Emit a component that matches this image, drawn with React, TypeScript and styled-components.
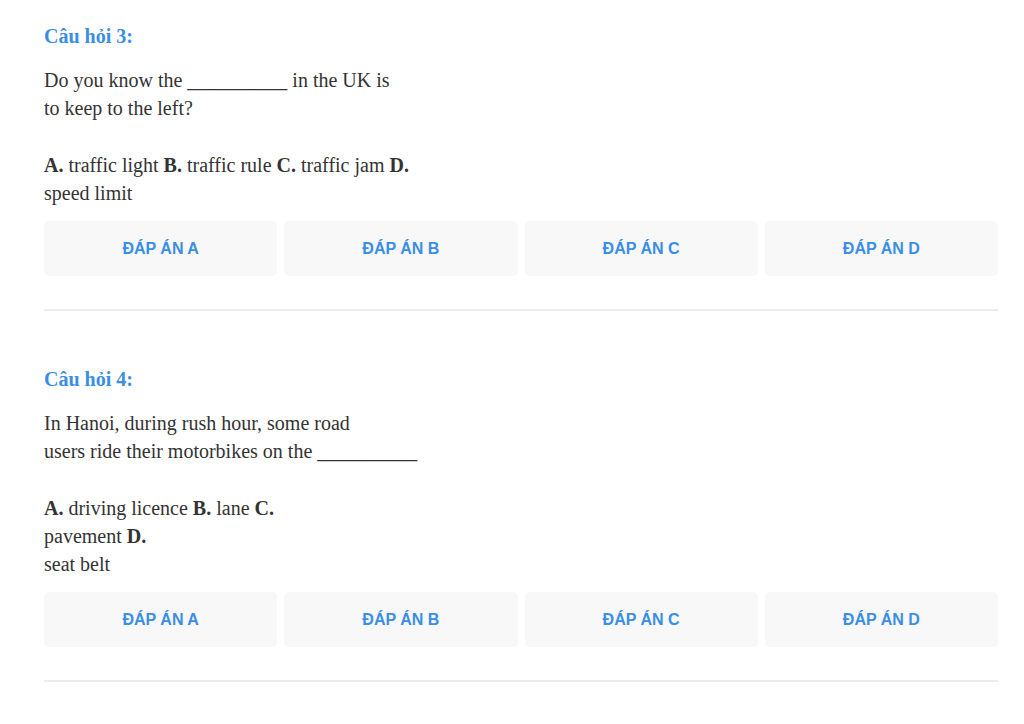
import React from "react";
import styled, { createGlobalStyle } from "styled-components";

const Global = createGlobalStyle`
  html, body { margin: 0; padding: 0; background: #ffffff; }
  body { font-family: "Liberation Serif", "Times New Roman", serif; color: #333333; }
`;

const Page = styled.div`
  padding: 22px 26px 0 44px;
  width: 954px;
`;

const Question = styled.section`
  display: flex;
  flex-direction: column;
`;

const Title = styled.div`
  font-family: "Liberation Serif", "Times New Roman", serif;
  font-weight: bold;
  font-size: 20px;
  line-height: 28px;
  color: #3a8ee4;
  margin-bottom: 16px;
`;

const Para = styled.p<{ $gap?: number }>`
  margin: 0 0 ${(p) => p.$gap ?? 0}px 0;
  font-size: 20px;
  line-height: 28px;
  color: #333333;
`;

const Buttons = styled.div`
  display: grid;
  grid-template-columns: repeat(4, 1fr);
  gap: 7px;
`;

const AnswerButton = styled.button`
  height: 55px;
  border: none;
  border-radius: 5px;
  background: #f8f8f8;
  color: #3a8ee4;
  font-family: "Liberation Sans", Arial, sans-serif;
  font-weight: bold;
  font-size: 16px;
  cursor: pointer;
  display: flex;
  align-items: center;
  justify-content: center;
`;

const Divider = styled.hr`
  border: none;
  height: 2px;
  background: #ececec;
  margin: 33px 0 54px 0;
`;

type Q = {
  n: number;
  text: React.ReactNode;
  options: React.ReactNode;
};

const questions: Q[] = [
  {
    n: 3,
    text: (
      <>
        Do you know the __________ in the UK is
        <br />
        to keep to the left?
      </>
    ),
    options: (
      <>
        <b>A.</b> traffic light <b>B.</b> traffic rule <b>C.</b> traffic jam <b>D.</b>
        <br />
        speed limit
      </>
    ),
  },
  {
    n: 4,
    text: (
      <>
        In Hanoi, during rush hour, some road
        <br />
        users ride their motorbikes on the __________
      </>
    ),
    options: (
      <>
        <b>A.</b> driving licence <b>B.</b> lane <b>C.</b>
        <br />
        pavement <b>D.</b>
        <br />
        seat belt
      </>
    ),
  },
];

export default function App() {
  return (
    <>
      <Global />
      <Page>
        {questions.map((q) => (
          <Question key={q.n}>
            <Title>Câu hỏi {q.n}:</Title>
            <Para $gap={29}>{q.text}</Para>
            <Para $gap={14}>{q.options}</Para>
            <Buttons>
              {["A", "B", "C", "D"].map((l) => (
                <AnswerButton key={l}>ĐÁP ÁN {l}</AnswerButton>
              ))}
            </Buttons>
            <Divider />
          </Question>
        ))}
      </Page>
    </>
  );
}
